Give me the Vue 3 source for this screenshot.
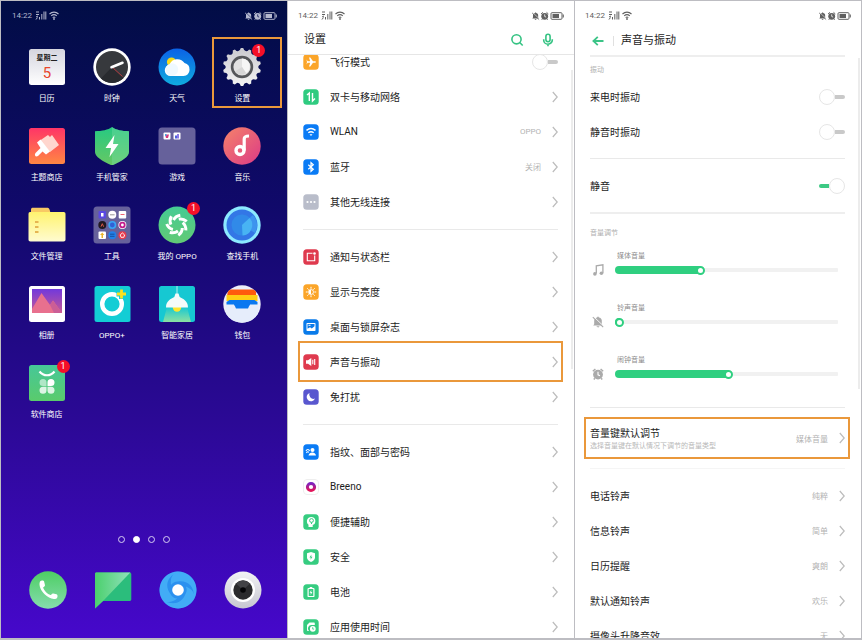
<template>
  <main class="screens">
    <!-- Home screen -->
    <section class="phone home">
      <div class="status-bar">
        <span class="time">14:22</span>
        <svg class="signal" viewBox="0 0 24 11" v-html="signalIcon"></svg>
        <svg class="status-right" viewBox="0 0 33 10" v-html="statusIcon"></svg>
      </div>

      <div class="app-grid">
        <button v-for="app in apps" :key="app.name" class="app">
          <svg class="app-icon" viewBox="0 0 38 38" v-html="app.icon"></svg>
          <span class="app-name">{{ app.name }}</span>
          <span v-if="app.badge" class="badge">{{ app.badge }}</span>
          <span v-if="app.marked" class="mark mark-app"></span>
        </button>
      </div>

      <div class="pager">
        <span v-for="n in 4" :key="n" class="dot" :class="{ active: n === 2 }"></span>
      </div>

      <div class="dock">
        <button v-for="app in dock" :key="app.name" class="dock-app" :aria-label="app.name">
          <svg class="app-icon" viewBox="0 0 38 38" v-html="app.icon"></svg>
        </button>
      </div>
    </section>

    <!-- Settings list -->
    <section class="phone settings">
      <div class="status-bar">
        <span class="time">14:22</span>
        <svg class="signal" viewBox="0 0 24 11" v-html="signalIcon"></svg>
        <svg class="status-right" viewBox="0 0 33 10" v-html="statusIcon"></svg>
      </div>
      <header class="title-bar">
        <h1 class="title">设置</h1>
        <button class="tool" aria-label="搜索">
          <svg viewBox="0 0 14 14">
            <circle cx="6.5" cy="6.3" r="4.6" />
            <path d="M9.7 9.5l3 3" />
          </svg>
        </button>
        <button class="tool" aria-label="语音">
          <svg viewBox="0 0 14 14">
            <rect x="4.9" y="1.3" width="4.2" height="7.4" rx="2.1" />
            <path d="M2.7 6.2v.7a4.3 4.3 0 0 0 8.6 0v-.7M7 11.2v2" />
          </svg>
        </button>
      </header>
      <div class="list-window">
        <div class="list">
          <ul v-for="(group, index) in settings" :key="index" class="group">
            <li v-for="row in group" :key="row.name" class="row">
              <svg class="row-icon" viewBox="0 0 16 16" v-html="row.icon"></svg>
              <label v-if="row.toggle" class="row-main">
                <span class="row-name">{{ row.name }}</span>
                <input type="checkbox" class="switch" />
              </label>
              <a v-else href="#" class="row-main">
                <span class="row-name">{{ row.name }}</span>
                <span v-if="row.value" class="row-value">{{ row.value }}</span>
                <svg class="chevron" viewBox="0 0 6 12"><path d="M.8 1l4.4 5-4.4 5" /></svg>
              </a>
              <span v-if="row.marked" class="mark mark-row"></span>
            </li>
          </ul>
        </div>
      </div>
      <span class="scrollbar"></span>
    </section>

    <!-- Sound and vibration -->
    <section class="phone sound">
      <div class="status-bar">
        <span class="time">14:22</span>
        <svg class="signal" viewBox="0 0 24 11" v-html="signalIcon"></svg>
        <svg class="status-right" viewBox="0 0 33 10" v-html="statusIcon"></svg>
      </div>
      <header class="title-bar">
        <button class="back" aria-label="返回">
          <svg viewBox="0 0 12 10"><path d="M11.5 5H1.5M5.8.8L1.4 5l4.4 4.2" /></svg>
        </button>
        <h1 class="title">声音与振动</h1>
      </header>
      <div class="sound-body">
        <h2 class="caption">振动</h2>
        <label v-for="row in vibration" :key="row" class="row">
          <span class="row-name">{{ row }}</span>
          <input type="checkbox" class="switch" />
        </label>
        <hr />
        <label class="row">
          <span class="row-name">静音</span>
          <input type="checkbox" class="switch" checked />
        </label>
        <hr class="thick" />

        <h2 class="caption">音量调节</h2>
        <div class="volumes">
          <div v-for="volume in volumes" :key="volume.id" class="volume">
            <label :for="volume.id" class="volume-name">{{ volume.name }}</label>
            <svg class="volume-icon" viewBox="0 0 12 12" v-html="volume.icon"></svg>
            <input
              :id="volume.id"
              v-model="volume.level"
              type="range"
              min="0"
              max="100"
              class="slider"
              :style="{ '--level': volume.level / 100 }"
            />
          </div>
        </div>
        <hr />

        <a href="#" class="row default-key">
          <span class="row-name">
            音量键默认调节
            <small>选择音量键在默认情况下调节的音量类型</small>
          </span>
          <span class="row-value">媒体音量</span>
          <svg class="chevron" viewBox="0 0 6 12"><path d="M.8 1l4.4 5-4.4 5" /></svg>
          <span class="mark mark-key"></span>
        </a>
        <hr class="faint" />

        <a v-for="tone in tones" :key="tone.name" href="#" class="row">
          <span class="row-name">{{ tone.name }}</span>
          <span class="row-value">{{ tone.value }}</span>
          <svg class="chevron" viewBox="0 0 6 12"><path d="M.8 1l4.4 5-4.4 5" /></svg>
        </a>
      </div>
      <span class="scrollbar"></span>
    </section>
  </main>
</template>

<script setup>
import { reactive } from 'vue'

const bellOff =
  '<path d="M2.2 8.2V4.6C2.2 2.6 3.6 1.6 5.2 1.4V.7h1.6v.7c1.8.3 3 1.4 3 3.2v3.6l1 1.3H1.2zM4.6 10.2h2.8c0 1.6-2.8 1.6-2.8 0z"/><path d="M1.6.6l10 9.6" stroke="var(--slash)" stroke-width="1"/><path d="M.8 1.2l10.4 10" stroke="currentColor" stroke-width="1.1"/>'
const alarm =
  '<circle cx="6" cy="6.6" r="4.9"/><path d="M.8 3.2L3.4.9M11.2 3.2L8.6.9M2.8 10.2l-1 1.3M9.2 10.2l1 1.3" stroke="currentColor" stroke-width="1.4"/><path d="M6 3.8v3l2 .9" stroke="var(--slash)" stroke-width="1.1" fill="none"/>'

// Status bar glyphs
const signalIcon = `
  <path d="M1 2h3M1 4.5h3M1 7l2-1M2.5 7.5L1 9.5M4.5 7v2.5M6.8 4v5.5M9 1.5v8M10.8 1.5v8" stroke="currentColor" stroke-width="1" fill="none"/>
  <path d="M14.5 4c2.6-2.5 6.4-2.5 9 0M16.2 5.9c1.7-1.5 3.9-1.5 5.6 0M17.7 7.6c.8-.7 1.8-.7 2.6 0" stroke="currentColor" stroke-width="1.1" fill="none"/>
  <circle cx="19" cy="9" r=".9"/>`
const statusIcon = `
  <g transform="translate(.5 1) scale(.68)">${bellOff}</g>
  <g transform="translate(9.5 .7) scale(.7)">${alarm}</g>
  <rect x="20" y="1.7" width="11" height="6.6" rx="1" fill="none" stroke="currentColor" stroke-width="1"/>
  <path d="M21.5 3.1h6.5v3.8h-6.5zM31.7 3.6h1.1v2.8h-1.1z"/>`

// Scalloped outline of the settings gear
const gear = Array.from({ length: 14 }, (_, i) => {
  const at = (turn, r) => {
    const angle = ((i + turn) * 2 * Math.PI) / 14
    return `${(19 + r * Math.sin(angle)).toFixed(2)} ${(19 - r * Math.cos(angle)).toFixed(2)}`
  }
  return `${i ? 'L' : 'M'}${at(-0.14, 19)}L${at(0.14, 19)}Q${at(0.3, 16)} ${at(0.5, 16.3)}Q${at(0.7, 16)} ${at(0.86, 19)}`
}).join('')

// Repeats a shape around the icon centre
const spin = (shape, count) =>
  Array.from(
    { length: count },
    (_, i) => `<g transform="rotate(${(i * 360) / count} 19 19)">${shape}</g>`,
  ).join('')

const gradient = (id, from, to, direction = 'x2="0" y2="1"') =>
  `<defs><linearGradient id="${id}" ${direction}><stop stop-color="${from}"/><stop offset="1" stop-color="${to}"/></linearGradient></defs>`

const folder = '<rect x=".5" y=".5" width="37" height="37" rx="3.5" fill="#66619b"/>'

const apps = [
  {
    name: '日历',
    icon: `${gradient('cal', '#d5d5df', '#ffffff')}<rect x="1" y="1" width="36" height="36" rx="2.5" fill="url(#cal)"/>
      <text x="19" y="11.5" text-anchor="middle" font-size="7" font-weight="700" fill="#222">星期二</text>
      <text x="19" y="29.5" text-anchor="middle" font-size="15" fill="#e8452c">5</text>`,
  },
  {
    name: '时钟',
    icon: `<circle cx="19" cy="19" r="18.7" fill="#fff"/><circle cx="19" cy="19" r="16" fill="#37393d"/>
      <path d="M19 19L8 30.6A16 16 0 0 0 30.5 30z" fill="#292b2f"/>
      <path d="M19 19l10.5 9.5" stroke="#c33d42" stroke-width=".9"/>
      <path d="M18.5 19.2L29.5 14.8" stroke="#fff" stroke-width="2.6" stroke-linecap="round"/>`,
  },
  {
    name: '天气',
    icon: `${gradient('sky', '#0b62e6', '#10addf')}<circle cx="19" cy="19" r="18.5" fill="url(#sky)"/>
      <circle cx="13.5" cy="14" r="4.6" fill="#f5d91e"/>
      <path d="M12.5 28a5.8 5.8 0 0 1-1-11.5 8.5 8.5 0 0 1 15-1.5 6.6 6.6 0 0 1-1 13z" fill="#fff"/>
      <circle cx="14" cy="21.5" r="6.2" fill="#e8f6ff" opacity=".7"/>`,
  },
  {
    name: '设置',
    badge: 1,
    marked: true,
    icon: `${gradient('gear', '#c9c9ce', '#f4f4f4')}<path d="${gear}" fill="url(#gear)"/>
      <circle cx="19" cy="19" r="9.9" fill="#e2e2e2" stroke="#55575a" stroke-width="2.6"/>
      <path d="M19 10.5v8.5l4 6a8 8 0 0 0-1-14z" fill="#f6f6f6"/><path d="M19 19l-7 4.5a8 8 0 0 0 11 1.5z" fill="#d6d6d6"/>`,
  },
  {
    name: '主题商店',
    icon: `${gradient('theme', '#ff3567', '#ff8743')}<rect x="1" y="1" width="36" height="36" rx="2.5" fill="url(#theme)"/>
      <path d="M12 13.5L20 8l2 2 2-2 7 10-9 7z" fill="#ffd6ce"/>
      <path d="M9 15.5l3.500-3 9.500 12-4 3-3.500-3-4.500 4.500c-2.500 1.500-4-1-2.500-3l5-5z" fill="#fff"/>`,
  },
  {
    name: '手机管家',
    icon: `${gradient('guard', '#27c982', '#67c863')}<path d="M19 0c4 3 10 4 17 4.2V25c0 5-8 9.5-17 13.5C10 34.5 2 30 2 25V4.2C9 4 15 3 19 0z" fill="url(#guard)"/>
      <path d="M19 0c4 3 10 4 17 4.2V25c0 5-8 9.5-17 13.5z" fill="#7bdba4" opacity=".4"/>
      <path d="M21.5 8L12.5 21h5.5l-1.5 9L25.5 17H20z" fill="#fff"/>`,
  },
  {
    name: '游戏',
    icon: `${folder}<rect x="5.5" y="5.5" width="7" height="7" rx="1" fill="#fff"/><rect x="15.5" y="5.5" width="7" height="7" rx="1" fill="#fff"/>
      <path d="M7 7.5h4l-1 3.5H8z" fill="#d93a7c"/><path d="M7 7h1.5v2H7z" fill="#49a5e0"/>
      <path d="M17 8.5h2v3h-2z" fill="#4d63df"/><path d="M19 7h2v4.5h-2z" fill="#8e79e6"/>`,
  },
  {
    name: '音乐',
    icon: `${gradient('music', '#f5836a', '#dc3a86', 'x2="1" y2="1"')}<circle cx="19" cy="19" r="18.7" fill="url(#music)"/>
      <circle cx="17" cy="23.5" r="4" fill="none" stroke="#fff" stroke-width="3.4"/>
      <path d="M21.2 23.5V12c0-2 1.2-3 4.8-3" fill="none" stroke="#fff" stroke-width="3.2"/>`,
  },
  {
    name: '文件管理',
    icon: `${gradient('files', '#fff36f', '#fffbd0')}<path d="M3 9V3.5C3 2 4 1.7 5 1.7h14c2 0 2.5 1 3.5 5z" fill="#f8c965"/>
      <path d="M2 6h33.5c1.5 0 2 .7 2 2v25.5c0 1.3-.7 2-2 2h-33c-1.5 0-2-.7-2-2V8c0-1.3.5-2 1.5-2z" fill="url(#files)"/>
      <path d="M7 16h3.5M7 21h3.5M7 26h3.5" stroke="#e5b552" stroke-width="2"/>`,
  },
  {
    name: '工具',
    icon: `${folder}<rect x="5.5" y="5" width="7.5" height="7.5" rx="1" fill="#5a48e2"/><path d="M8 7h2.5v3.5H8z" fill="#fff"/>
      <circle cx="19.3" cy="8.8" r="4" fill="#fff"/><path d="M17 8.8h4.6" stroke="#999" stroke-width="1"/>
      <rect x="25.7" y="5" width="7.5" height="7.5" rx="1" fill="#fff"/><path d="M27.5 8.5h4" stroke="#ee6575" stroke-width="1"/>
      <circle cx="9.3" cy="19" r="4" fill="#211922"/><path d="M8 20.7l1.3-3 1.3 3" stroke="#da5946" fill="none"/>
      <circle cx="19.3" cy="19" r="3.2" fill="#3260d4" stroke="#38a6f5" stroke-width="1.6"/>
      <circle cx="29.4" cy="19" r="4" fill="#fff"/><circle cx="29.4" cy="19" r="2.3" fill="#fff" stroke="#c21c8c" stroke-width="1.8"/>
      <rect x="5.5" y="25.5" width="7.5" height="7.5" rx="1" fill="#fff"/><path d="M9.3 26.5l2 2.5H10v3H8.5v-3H7z" fill="#eab32c"/>
      <circle cx="19.3" cy="29.3" r="4" fill="#2280ea"/><path d="M17 28.2h4.5M17 30.3h4.5" stroke="#15509f" stroke-width="1"/>
      <circle cx="29.4" cy="29.3" r="4" fill="#e83a4c"/><path d="M29.4 27l2.2 1.9-.8 2.4H28l-.8-2.4z" stroke="#fff" stroke-width=".9" fill="none"/>`,
  },
  {
    name: '我的 OPPO',
    badge: 1,
    icon: `${gradient('mine', '#45cb94', '#62ca75')}<circle cx="19" cy="19" r="18.5" fill="url(#mine)"/>
      ${spin('<path d="M15.5 14Q17.5 10 22.3 9.2" fill="none" stroke="#fff" stroke-width="3"/>', 7)}`,
  },
  {
    name: '查找手机',
    icon: `<circle cx="19" cy="19" r="18.7" fill="#8ce9ff"/><circle cx="19" cy="19" r="15.5" fill="#3377e6"/>
      <circle cx="19" cy="19" r="10.5" fill="#318ae8"/><path d="M19 19L30 9a15 15 0 0 1 2 18z" fill="#3d94ee"/>
      <path d="M19 19l7.5-7a10.5 10.5 0 0 1-7 17.5z" fill="#48b4f3"/>`,
  },
  {
    name: '相册',
    icon: `${gradient('photo', '#7138dc', '#c65a95')}<rect x="1" y="1" width="36" height="36" rx="2.5" fill="#fff"/>
      <path d="M4 4h30v24H4z" fill="url(#photo)"/><path d="M4 24l9.5-16L22 20l3-4.5 9 12.5H4z" fill="#e8708e"/><path d="M22 20l3-4.5 9 12.5h-8z" fill="#cb5e96"/>`,
  },
  {
    name: 'OPPO+',
    icon: `<rect x="1.5" y="1" width="36" height="36" rx="2.5" fill="#13cdd5"/>
      <circle cx="19" cy="19" r="9.8" fill="none" stroke="#fff" stroke-width="4.4"/>
      <path d="M28.5 4v10M23.5 9h10" stroke="#13cdd5" stroke-width="5"/><path d="M28.5 4.5v9M24 9h9" stroke="#ffe11c" stroke-width="2.8"/>`,
  },
  {
    name: '智能家居',
    icon: `${gradient('lamp', '#16c8d2', '#8ce0a2')}<rect x="1" y="1" width="36" height="36" rx="2.5" fill="#16c8d2"/>
      <path d="M9 22h20l4 15H5z" fill="url(#lamp)"/><circle cx="19" cy="22.5" r="4.2" fill="#ffe52e"/>
      <path d="M19 1v9" stroke="#d7f7f7" stroke-width=".8"/>
      <path d="M8 22.5c0-7 5-8.5 8.3-10.5L17.5 8.5h3l1.2 3.5C25 14 30 15.5 30 22.5z" fill="#f5fbfa"/>`,
  },
  {
    name: '钱包',
    icon: `<defs><clipPath id="wallet"><circle cx="19" cy="19" r="18.7"/></clipPath></defs><g clip-path="url(#wallet)">
      <path d="M0 0h38v38H0z" fill="#eceefa"/><path d="M5 4.5h28v7H4z" fill="#ff5b0d"/><path d="M3.5 10h31v6h-31z" fill="#ffce13"/>
      <path d="M3.5 17l3-2h25l3 2v4h-31z" fill="#0a78f0"/><path d="M3 19.5h8l3 4h10l3-4h8V38H3z" fill="#e6edfb"/>
      <path d="M11 19h16l-2 4.5H13z" fill="#0a78f0"/></g>`,
  },
  {
    name: '软件商店',
    badge: 1,
    icon: `${gradient('store', '#46c798', '#5acb6c')}<rect x="1" y="1" width="36" height="36" rx="2.5" fill="url(#store)"/>
      <path d="M11.5 7.5c4 5 11 5 15 0" fill="none" stroke="#fff" stroke-width="2.2"/>
      <path d="M18.5 22H15a3.5 3.5 0 1 1 3.5-3.5z" fill="#fff" opacity=".55"/><path d="M19.5 22V18.5a3.5 3.5 0 1 1 3.5 3.5z" fill="#fff"/>
      <path d="M18.5 22.8v3.5a3.5 3.5 0 1 1-3.5-3.5z" fill="#fff" opacity=".8"/><path d="M19.5 22.8H23a3.5 3.5 0 1 1-3.5 3.5z" fill="#fff" opacity=".8"/>`,
  },
]

const dock = [
  {
    name: '电话',
    icon: `${gradient('call', '#4dce63', '#86dcae')}<circle cx="19" cy="19" r="18.8" fill="url(#call)"/>
      <path d="M11 10.5c1-1.2 3.6-1.2 4.1 0l.9 3.7c.2 1-1.9 2-1.9 2.5 1.2 3.2 4.2 6.2 7.4 7.4.6.2 1.5-1.9 2.6-1.7l3.5.8c1.4.5 1.2 3.4 0 4.2-3.8 1.8-8.5-.6-12-4.1-3.6-3.6-6.2-9-4.6-12.8z" fill="#fff"/>`,
  },
  {
    name: '信息',
    icon: `${gradient('sms', '#4bd06d', '#90e0bb', 'x2="1" y2="0"')}<path d="M1 3c0-1 .6-1.5 1.5-1.5h33c1 0 1.8.6 1.8 1.7v25c0 1-.7 1.8-1.8 1.8H9L1 37.5z" fill="#2bbd7c"/>
      <path d="M1 3c0-1 .6-1.5 1.5-1.5h33.8L9 30l-8 7.5z" fill="url(#sms)"/>`,
  },
  {
    name: '浏览器',
    icon: `<circle cx="19" cy="19" r="18.5" fill="#2b91ef"/>
      ${spin('<path d="M19 .5A18.5 18.5 0 0 1 35 28.2C36 17 30 9 19 10.5a8 8 0 0 0-7 3.5C11 8 13 2 19 .5z" fill="#4bb5f8" opacity=".75"/>', 3)}
      <circle cx="19" cy="19" r="5.8" fill="#fff"/>`,
  },
  {
    name: '相机',
    icon: `${gradient('camera', '#f2f2f5', '#c7c7d1')}<circle cx="19" cy="19" r="18.5" fill="url(#camera)"/><circle cx="19" cy="19" r="12" fill="#fff"/>
      <circle cx="19" cy="19" r="9.7" fill="#2b2b2d"/><path d="M19 19L12 12.5a9.7 9.7 0 0 1 14 0z" fill="#434346"/><circle cx="19" cy="19" r="2.8" fill="#050507"/>`,
  },
]

// Rounded tile behind each settings glyph
const tile = (color, glyph) =>
  `<rect x=".3" y=".3" width="15.4" height="15.4" rx="3.5" fill="${color}"/>${glyph}`

const settings = [
  [
    {
      name: '飞行模式',
      toggle: true,
      icon: tile('#fba529', '<path d="M3.5 5.5l1.2 1.7h2.5L6 3.5h1.3l2.7 3.7h2c1.3 0 1.3 1.6 0 1.6h-2l-2.7 3.7H6l1.2-3.7H4.7L3.5 10.500 4 8z" fill="#fff"/>'),
    },
    {
      name: '双卡与移动网络',
      icon: tile('#2fcb80', '<path d="M4 6l2.3-2v8M9.5 4v8L12 9.5" fill="none" stroke="#fff" stroke-width="1.4"/>'),
    },
    {
      name: 'WLAN',
      value: 'OPPO',
      icon: tile('#0a7bf5', '<path d="M3.5 6.4c2.7-2.2 6.3-2.2 9 0M5.3 8.7c1.7-1.3 3.7-1.3 5.4 0" fill="none" stroke="#fff" stroke-width="1.4"/><path d="M6.5 10.3h3L8 12z" fill="#fff"/>'),
    },
    {
      name: '蓝牙',
      value: '关闭',
      icon: tile('#0a7bf5', '<path d="M5.3 5.8l5 4.4L8 12.3V3.7l2.3 2.1-5 4.4" fill="none" stroke="#fff" stroke-width="1.2"/>'),
    },
    {
      name: '其他无线连接',
      icon: tile('#b9bdca', '<circle cx="4.5" cy="8" r="1.1" fill="#fff"/><circle cx="8" cy="8" r="1.1" fill="#fff"/><circle cx="11.5" cy="8" r="1.1" fill="#fff"/>'),
    },
  ],
  [
    {
      name: '通知与状态栏',
      icon: tile('#df3a4e', '<path d="M9.5 4.3H4.3v7.4h7.4V6.5" fill="none" stroke="#fff" stroke-width="1.1"/><circle cx="11.5" cy="4.5" r="1.3" fill="#fff"/>'),
    },
    {
      name: '显示与亮度',
      icon: tile('#fba529', '<path d="M8 2.8v10.4M2.8 8h10.4M4.3 4.3l7.4 7.4M11.7 4.3l-7.4 7.4" stroke="#fff" stroke-width="1"/><circle cx="8" cy="8" r="3.2" fill="#fff" stroke="#fba529" stroke-width=".7"/><path d="M8 6v4a2 2 0 0 0 0-4z" fill="#fba529"/>'),
    },
    {
      name: '桌面与锁屏杂志',
      icon: tile('#0a7bea', '<rect x="3.5" y="4" width="9" height="8" rx=".8" fill="#fff"/><path d="M4.5 5h7v2.2L8.8 9.5 7 8.2l-2.5 1.6z" fill="#0a7bea"/><path d="M5.5 6.3h2" stroke="#fff"/>'),
    },
    {
      name: '声音与振动',
      marked: true,
      icon: tile('#df3a4e', '<path d="M3 6.3h2L8.3 4v8L5 9.7H3z" fill="#fff"/><path d="M9.8 5.7v4.6M11.7 5v6" stroke="#fff" stroke-width="1.1"/>'),
    },
    {
      name: '免打扰',
      icon: tile('#5957cf', '<path d="M6.5 4a4.3 4.3 0 1 0 5.5 5.5A4.2 4.2 0 0 1 6.5 4z" fill="#fff"/>'),
    },
  ],
  [
    {
      name: '指纹、面部与密码',
      icon: tile('#0a7bf5', '<circle cx="9.5" cy="6" r="2" fill="#fff"/><path d="M5.5 11.5c.5-4 7-4 7.5 0z" fill="#fff"/><path d="M3 7c.8-2 3-2 3.5 0M3.5 9c.5-1.5 1.7-1.5 2.2-.5" fill="none" stroke="#fff" stroke-width="1.1"/>'),
    },
    {
      name: 'Breeno',
      icon: '<rect x=".5" y=".5" width="15" height="15" rx="3.5" fill="#fff" stroke="#eee"/><defs><linearGradient id="breeno" x2="0" y2="1"><stop stop-color="#7c24c0"/><stop offset="1" stop-color="#e31559"/></linearGradient></defs><circle cx="8" cy="8" r="3.6" fill="none" stroke="url(#breeno)" stroke-width="3"/>',
    },
    {
      name: '便捷辅助',
      icon: tile('#36cc80', '<path d="M5.5 13v-2.2C2.5 8 4 3 8.3 3c4.2 0 5 4.5 3.2 7l-1.8 1V13z" fill="#fff"/><circle cx="8.5" cy="6.5" r="1.9" fill="none" stroke="#36cc80"/><path d="M8.5 8.4V10" stroke="#36cc80"/>'),
    },
    {
      name: '安全',
      icon: tile('#36cc80', '<path d="M8 3l4 1.3v4C12 11 10 12.3 8 13c-2-.7-4-2-4-4.7v-4z" fill="#fff"/><path d="M8.4 5.5L6.5 8.4h1.3l-.3 2.3 2-3H8.2z" fill="#36cc80"/>'),
    },
    {
      name: '电池',
      icon: tile('#36cc80', '<rect x="5.1" y="4.5" width="5.8" height="8" rx=".6" fill="none" stroke="#fff" stroke-width="1.2"/><path d="M6.7 3h2.6v1.2H6.7zM8.3 6L6.6 8.8h1.2L7.6 11l1.8-3H8.2z" fill="#fff"/>'),
    },
    {
      name: '应用使用时间',
      icon: tile('#36cc80', '<path d="M4 6l2.5-2.5h4.3c.7 0 1 .3 1 1V6H9a3.5 3.5 0 0 0-3 6H4.8c-.5 0-.8-.3-.8-.8z" fill="#fff"/><circle cx="9.8" cy="9.8" r="2.9" fill="#fff"/><path d="M9.7 8.2v1.9h1.4" fill="none" stroke="#36cc80" stroke-width=".8"/>'),
    },
  ],
]

const vibration = ['来电时振动', '静音时振动']

const volumes = reactive([
  {
    id: 'media',
    name: '媒体音量',
    level: 38,
    icon: '<path d="M4.3 9.5V1.8L10.9.8v8.2" fill="none" stroke="currentColor" stroke-width="1.3"/><circle cx="2.9" cy="9.9" r="1.8"/><circle cx="9.4" cy="9.3" r="1.8"/>',
  },
  { id: 'ring', name: '铃声音量', level: 0, icon: bellOff },
  { id: 'alarm', name: '闹钟音量', level: 51, icon: alarm },
])

const tones = [
  { name: '电话铃声', value: '纯粹' },
  { name: '信息铃声', value: '简单' },
  { name: '日历提醒', value: '爽朗' },
  { name: '默认通知铃声', value: '欢乐' },
  { name: '摄像头升降音效', value: '无' },
]
</script>

<style>
body {
  margin: 0;
}
</style>

<style scoped>
.screens {
  display: grid;
  grid-template-columns: repeat(3, 1fr);
  gap: 1px;
  box-sizing: border-box;
  height: 100vh;
  padding: 1px 1px 2px;
  background: #bdbdc2;
  font-family: Roboto, 'Noto Sans CJK SC', sans-serif;
  font-size: 10px;
  color: #1c1c1c;
}

.phone {
  --slash: #fff;
  position: relative;
  display: flex;
  flex-direction: column;
  min-width: 0;
  min-height: 0;
  overflow: hidden;
  background: #fff;
}

button {
  padding: 0;
  border: none;
  background: none;
  font: inherit;
  color: inherit;
  cursor: pointer;
}

a {
  color: inherit;
  text-decoration: none;
}

/* Status Bar */
.status-bar {
  display: flex;
  align-items: center;
  flex-shrink: 0;
  gap: 3px;
  height: 29px;
  padding: 0 10px;
  color: #606060;
}

.time {
  font-size: 8px;
}

.signal {
  width: 24px;
  height: 11px;
  fill: currentColor;
}

.status-right {
  width: 33px;
  height: 10px;
  margin-left: auto;
  fill: currentColor;
}

/* Orange frames */
.mark {
  position: absolute;
  border: 2px solid #ea983b;
  pointer-events: none;
}

.mark-app {
  inset: -11px -7px 19px 2px;
}

.mark-row {
  inset: -3px -5px;
}

.mark-key {
  inset: 0 -5px 0 -6px;
}

/* Home Screen */
.home {
  --slash: #040d4c;
  background: linear-gradient(#010d45, #10096a 32%, #2c0997 67%, #4608cb);
  color: #fff;
}

.home .status-bar {
  padding-left: 11px;
  color: #b4b8ce;
}

.app-grid {
  display: grid;
  flex: 1;
  grid-template-columns: repeat(4, 1fr);
  grid-auto-rows: 79px;
  padding: 18px 12px 0 13px;
}

.app {
  position: relative;
  display: flex;
  flex-direction: column;
  align-items: center;
  gap: 6px;
}

.app-icon {
  display: block;
  width: 38px;
  height: 38px;
}

.app-name {
  font-size: 8px;
  line-height: 13px;
  white-space: nowrap;
}

.badge {
  position: absolute;
  top: -4px;
  left: 50%;
  width: 13px;
  height: 13px;
  margin-left: 10px;
  border-radius: 50%;
  background: #f50f28;
  font-size: 9px;
  line-height: 13px;
}

.pager {
  display: flex;
  justify-content: center;
  gap: 8px;
  padding-bottom: 28px;
}

.dot {
  box-sizing: border-box;
  width: 7px;
  height: 7px;
  border: 1px solid #d6cdf2;
  border-radius: 50%;
}

.dot.active {
  border-color: #fff;
  background: #fff;
}

.dock {
  display: grid;
  grid-template-columns: repeat(4, 1fr);
  padding: 0 12px 29px 14px;
}

.dock-app {
  display: flex;
  justify-content: center;
}

/* Title Bar */
.title-bar {
  display: flex;
  align-items: center;
  flex-shrink: 0;
  height: 20px;
}

.title {
  margin: 0;
  font-size: 11px;
  font-weight: 400;
  line-height: 20px;
}

.settings .title-bar {
  gap: 17px;
  padding: 0 19px 4px 16px;
  border-bottom: 1px solid #e6e6e6;
}

.settings .title {
  flex: 1;
}

.tool svg {
  display: block;
  width: 14px;
  height: 14px;
  fill: none;
  stroke: #35c383;
  stroke-width: 1.6;
}

/* Rows */
.list-window {
  flex: 1;
  min-height: 0;
  overflow: hidden;
}

/* The list is scrolled a little under the title bar */
.list {
  margin-top: -11px;
  padding: 0 16px 0 15px;
}

.group {
  margin: 0;
  padding: 0;
  list-style: none;
}

.group + .group {
  margin-top: 10px;
  padding-top: 9px;
  border-top: 1px solid #e9e9e9;
}

.row {
  position: relative;
  display: flex;
  align-items: center;
  gap: 11px;
  height: 35px;
}

.row-icon {
  flex-shrink: 0;
  width: 16px;
  height: 16px;
}

.row-main {
  display: flex;
  flex: 1;
  align-items: center;
  gap: 11px;
  height: 100%;
}

.row-name {
  flex: 1;
  white-space: nowrap;
}

.row-value {
  font-size: 8px;
  color: #b3b3b3;
}

.chevron {
  flex-shrink: 0;
  width: 6px;
  height: 12px;
  fill: none;
  stroke: #bcbcbc;
  stroke-width: 1.2;
}

/* Switch */
.switch {
  display: flex;
  align-items: center;
  width: 26px;
  height: 16px;
  margin: 0;
  appearance: none;
}

.switch::before {
  content: '';
  box-sizing: border-box;
  width: 16px;
  height: 16px;
  border: 1px solid #e6e6e6;
  border-radius: 50%;
}

.switch::after {
  content: '';
  width: 10px;
  height: 4px;
  border-radius: 0 2px 2px 0;
  background: #c9c9c9;
}

.switch:checked {
  flex-direction: row-reverse;
}

.switch:checked::after {
  border-radius: 2px 0 0 2px;
  background: #3cc984;
}

.scrollbar {
  position: absolute;
  top: 69px;
  right: 1px;
  width: 2px;
  height: 47%;
  background: #ececec;
}

/* Sound Screen */
.sound .title-bar {
  height: 21px;
  padding: 0 17px;
}

.back {
  display: flex;
  align-items: center;
  height: 10px;
  padding-right: 9px;
  border-right: 1px solid #e0e0e0;
}

.back svg {
  width: 12px;
  height: 10px;
  fill: none;
  stroke: #3cc487;
  stroke-width: 1.8;
}

.sound .title {
  margin-left: 7px;
}

.sound-body {
  flex: 1;
  min-height: 0;
  margin-top: 4px;
  padding: 0 16px 0 15px;
  overflow: hidden;
}

.sound-body::before {
  content: '';
  display: block;
  height: 2px;
  background: #eee;
}

.sound .scrollbar {
  top: 57px;
  height: 52%;
}

.caption {
  margin: 0;
  padding: 8px 0 4px;
  font-size: 7px;
  font-weight: 400;
  line-height: 10px;
  color: #b0b0b0;
}

hr {
  height: 1px;
  margin: 9px 0;
  border: none;
  background: #e9e9e9;
}

hr.thick {
  height: 2px;
  margin-bottom: 6px;
  background: #eee;
}

hr.faint {
  background: #f5f5f5;
}

/* Volume Sliders */
.volumes {
  display: grid;
  gap: 26px;
  padding: 8px 7px 18px 2px;
}

.volume {
  display: grid;
  grid-template-columns: 12px 1fr;
  column-gap: 11px;
  align-items: center;
}

.volume-name {
  grid-column: 2;
  padding: 0 0 2px 2px;
  font-size: 7px;
  line-height: 12px;
  color: #8c8c8c;
}

.volume-icon {
  width: 12px;
  height: 12px;
  color: #aaa;
  fill: currentColor;
}

.slider {
  width: 100%;
  height: 8px;
  margin: 0;
  border-radius: 4px;
  appearance: none;
  background:
    linear-gradient(#2fcf80, #2fcf80) left / calc(var(--level) * (100% - 9px) + 5px) 8px no-repeat,
    linear-gradient(#f1f1f1, #f1f1f1) center / 100% 4px no-repeat;
}

.slider::-webkit-slider-thumb {
  box-sizing: border-box;
  width: 9px;
  height: 9px;
  border: 2px solid #2fcf80;
  border-radius: 50%;
  appearance: none;
  background: #fff;
}

/* Volume Key Row */
.default-key {
  height: 42px;
}

.default-key small {
  display: block;
  font-size: 7px;
  line-height: 12px;
  color: #b8b8b8;
}
</style>
